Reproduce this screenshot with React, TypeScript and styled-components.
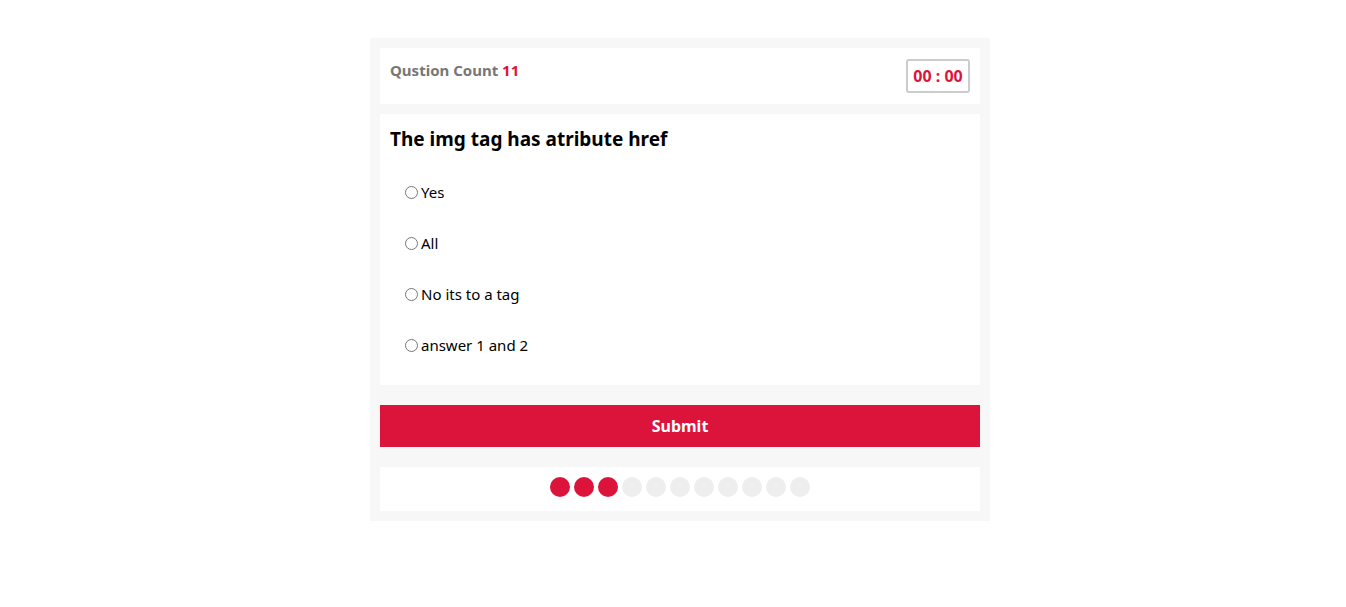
import React from "react";
import styled, { createGlobalStyle } from "styled-components";

const Global = createGlobalStyle`
  html, body { margin: 0; padding: 0; background: #fff; }
  body { font-family: "Noto Sans", "Open Sans", Arial, sans-serif; }
`;

const Page = styled.div`
  display: flex;
  justify-content: center;
  padding: 38px 0 0 14px;
`;

const Quiz = styled.div`
  width: 620px;
  box-sizing: border-box;
  background: #f7f7f7;
  padding: 10px;
  display: flex;
  flex-direction: column;
`;

const Header = styled.div`
  background: #fff;
  display: flex;
  justify-content: space-between;
  align-items: flex-start;
  padding: 11px 10px;
`;

const CountLabel = styled.div`
  font-size: 15px;
  font-weight: 700;
  color: #777;
  line-height: 20px;
  margin-top: 1px;
`;

const CountNum = styled.span`
  color: #dc143c;
`;

const Timer = styled.div`
  box-sizing: border-box;
  border: 2px solid #ccc;
  border-radius: 3px;
  width: 64px;
  height: 34px;
  display: flex;
  align-items: center;
  justify-content: center;
  color: #dc143c;
  font-weight: 700;
  font-size: 16px;
`;

const QuestionCard = styled.div`
  background: #fff;
  margin-top: 10px;
  padding: 12px 10px 14px;
`;

const Title = styled.h3`
  margin: 0;
  font-size: 19px;
  line-height: 27px;
  font-weight: 700;
  color: #000;
`;

const Options = styled.div`
  margin-top: 14px;
  display: flex;
  flex-direction: column;
`;

const Option = styled.label`
  display: flex;
  align-items: center;
  padding: 15px 10px;
  font-size: 15px;
  line-height: 21px;
  color: #000;
`;

const Radio = styled.input`
  width: 13px;
  height: 13px;
  margin: 0 3px 0 5px;
  accent-color: #555;
`;

const Submit = styled.button`
  margin-top: 20px;
  height: 42px;
  border: none;
  background: #dc143c;
  color: #fff;
  font-family: inherit;
  font-weight: 700;
  font-size: 16px;
  cursor: pointer;
`;

const Progress = styled.div`
  margin-top: 20px;
  background: #fff;
  box-sizing: border-box;
  height: 44px;
  padding-top: 10px;
  display: flex;
  align-items: flex-start;
  justify-content: center;
  gap: 4px;
`;

const Dot = styled.span<{ $done: boolean }>`
  width: 20px;
  height: 20px;
  border-radius: 50%;
  background: ${(p) => (p.$done ? "#dc143c" : "#eeeeee")};
`;

const answers = ["Yes", "All", "No its to a tag", "answer 1 and 2"];

export default function App() {
  return (
    <>
      <Global />
      <Page>
        <Quiz>
          <Header>
            <CountLabel>
              Qustion Count <CountNum>11</CountNum>
            </CountLabel>
            <Timer>00 : 00</Timer>
          </Header>
          <QuestionCard>
            <Title>The img tag has atribute href</Title>
            <Options>
              {answers.map((a) => (
                <Option key={a}>
                  <Radio type="radio" name="answer" value={a} />
                  {a}
                </Option>
              ))}
            </Options>
          </QuestionCard>
          <Submit>Submit</Submit>
          <Progress>
            {Array.from({ length: 11 }).map((_, i) => (
              <Dot key={i} $done={i < 3} />
            ))}
          </Progress>
        </Quiz>
      </Page>
    </>
  );
}
